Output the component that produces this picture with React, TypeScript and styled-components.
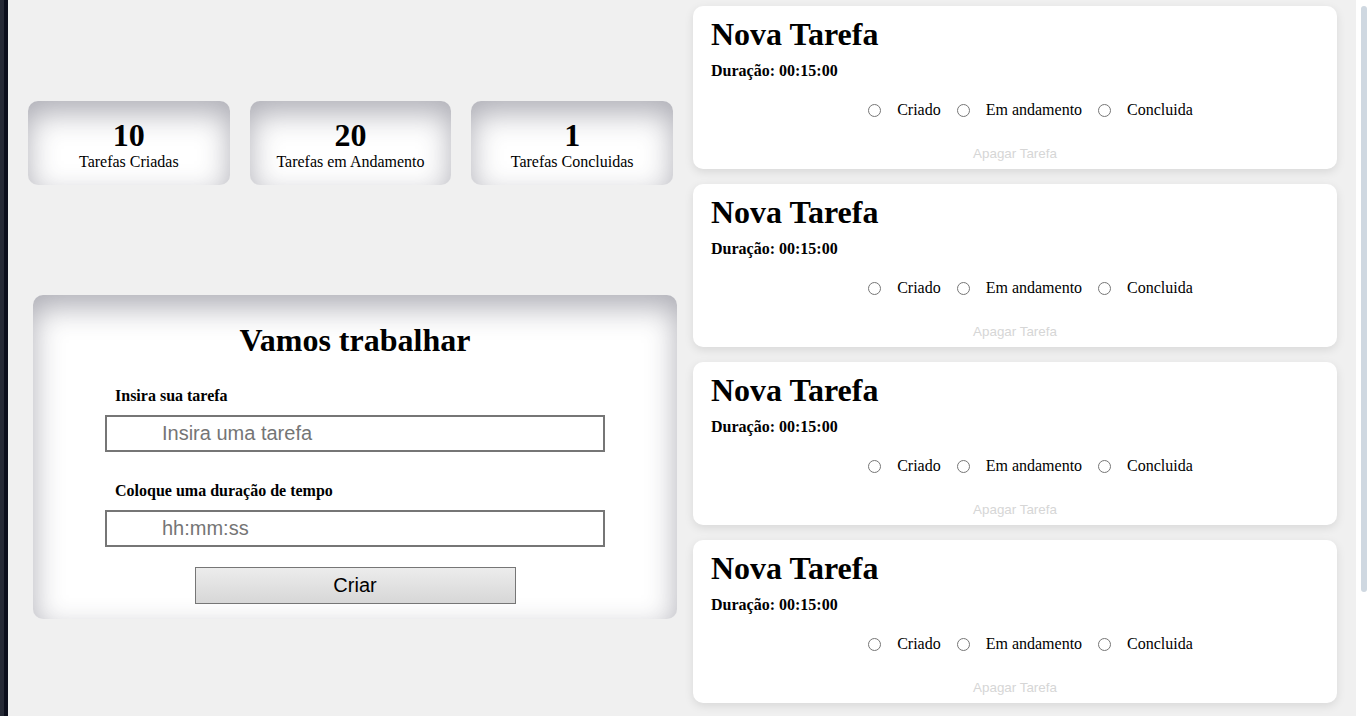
import React from "react";
import styled, { createGlobalStyle } from "styled-components";

const GlobalStyle = createGlobalStyle`
  html, body {
    margin: 0;
    padding: 0;
    height: 100%;
    overflow: hidden;
  }
  body {
    background: #f0f0f0;
    font-family: "Liberation Serif", "Times New Roman", serif;
    color: #000;
  }
`;

const Page = styled.div`
  display: flex;
  align-items: stretch;
  height: 100vh;
  overflow: hidden;
`;

const Strip = styled.div`
  flex: 0 0 8px;
  background: linear-gradient(to right, #262a36 0 4px, #0c0f1c 4px 8px);
`;

const LeftCol = styled.section`
  flex: 0 0 677px;
  box-sizing: border-box;
  padding-top: 101px;
`;

const StatsRow = styled.div`
  display: grid;
  grid-template-columns: repeat(3, 1fr);
  gap: 20px;
  width: 645px;
  margin-left: 20px;
`;

const insetShade = `
  background: #ffffff;
  border-radius: 10px;
  box-shadow: inset 0 12px 30px rgba(50, 50, 70, 0.4);
`;

const StatCard = styled.div`
  ${insetShade}
  height: 84px;
  box-sizing: border-box;
  padding-top: 18px;
  text-align: center;
`;

const StatNumber = styled.div`
  font-weight: bold;
  font-size: 32px;
  line-height: 32px;
`;

const StatLabel = styled.div`
  font-size: 16px;
  line-height: 18px;
  margin-top: 2px;
`;

const FormCard = styled.form`
  ${insetShade}
  width: 644px;
  margin: 110px 0 0 25px;
  box-sizing: border-box;
  padding: 27px 0 15px;
  display: flex;
  flex-direction: column;
  align-items: center;
`;

const FormTitle = styled.h1`
  margin: 0;
  font-size: 32px;
  line-height: 36px;
  font-weight: bold;
`;

const Field = styled.div<{ $top: number }>`
  width: 500px;
  display: flex;
  flex-direction: column;
  margin-top: ${(p) => p.$top}px;
`;

const FieldLabel = styled.label`
  font-weight: bold;
  font-size: 16px;
  line-height: 18px;
  padding-left: 10px;
  margin-bottom: 10px;
`;

const TextInput = styled.input`
  box-sizing: border-box;
  width: 500px;
  height: 37px;
  border: 2px solid #767676;
  background: #ffffff;
  padding: 0 10px 0 55px;
  font-family: "Liberation Sans", Arial, sans-serif;
  font-size: 20px;
  outline: none;
  &::placeholder {
    color: #757575;
  }
`;

const SubmitButton = styled.button`
  box-sizing: border-box;
  width: 321px;
  height: 37px;
  margin-top: 20px;
  border: 1px solid #767676;
  background: linear-gradient(to bottom, #ececec, #d7d7d7);
  font-family: "Liberation Sans", Arial, sans-serif;
  font-size: 20px;
  color: #000;
  padding: 0;
`;

const RightCol = styled.section`
  flex: 0 0 644px;
  margin-left: 8px;
  padding: 6px 0 8px;
  display: flex;
  flex-direction: column;
  gap: 15px;
`;

const TaskCard = styled.article`
  background: #ffffff;
  border-radius: 10px;
  box-shadow: 0 3px 10px rgba(0, 0, 0, 0.1);
  padding: 10px 18px 8px;
  display: flex;
  flex-direction: column;
`;

const TaskTitle = styled.h1`
  margin: 0;
  font-size: 32px;
  line-height: 36px;
  font-weight: bold;
`;

const Duration = styled.h4`
  margin: 10px 0 0;
  font-size: 16px;
  line-height: 18px;
  font-weight: bold;
`;

const StatusRow = styled.div`
  display: flex;
  justify-content: center;
  gap: 16px;
  margin-top: 20px;
  padding-left: 31px;
  font-size: 16px;
  line-height: 20px;
`;

const StatusOption = styled.label`
  display: flex;
  align-items: center;
  gap: 16px;
`;

const Radio = styled.input`
  margin: 0;
  width: 13px;
  height: 13px;
`;

const DeleteButton = styled.button`
  align-self: center;
  margin-top: 26px;
  padding: 0;
  border: none;
  background: none;
  font-family: "Liberation Sans", Arial, sans-serif;
  font-size: 13.4px;
  line-height: 15px;
  color: #d6d6d6;
`;

const Gutter = styled.div`
  flex: 1 1 auto;
`;

const ScrollTrack = styled.div`
  flex: 0 0 13px;
  box-sizing: border-box;
  background: #ffffff;
  padding: 6px 2px 0 5px;
`;

const ScrollThumb = styled.div`
  height: 586px;
  border-radius: 3px;
  background: #cfd8e1;
`;

const stats = [
  { value: 10, label: "Tarefas Criadas" },
  { value: 20, label: "Tarefas em Andamento" },
  { value: 1, label: "Tarefas Concluidas" },
];

const tasks = Array.from({ length: 4 }, (_, i) => ({
  id: i,
  title: "Nova Tarefa",
  duration: "00:15:00",
}));

const statuses = ["Criado", "Em andamento", "Concluida"];

export default function App() {
  return (
    <>
      <GlobalStyle />
      <Page>
        <Strip />
        <LeftCol>
          <StatsRow>
            {stats.map((s) => (
              <StatCard key={s.label}>
                <StatNumber>{s.value}</StatNumber>
                <StatLabel>{s.label}</StatLabel>
              </StatCard>
            ))}
          </StatsRow>
          <FormCard onSubmit={(e) => e.preventDefault()}>
            <FormTitle>Vamos trabalhar</FormTitle>
            <Field $top={29}>
              <FieldLabel htmlFor="tarefa">Insira sua tarefa</FieldLabel>
              <TextInput id="tarefa" type="text" placeholder="Insira uma tarefa" />
            </Field>
            <Field $top={30}>
              <FieldLabel htmlFor="duracao">Coloque uma duração de tempo</FieldLabel>
              <TextInput id="duracao" type="text" placeholder="hh:mm:ss" />
            </Field>
            <SubmitButton type="submit">Criar</SubmitButton>
          </FormCard>
        </LeftCol>
        <RightCol>
          {tasks.map((t) => (
            <TaskCard key={t.id}>
              <TaskTitle>{t.title}</TaskTitle>
              <Duration>Duração: {t.duration}</Duration>
              <StatusRow>
                {statuses.map((s) => (
                  <StatusOption key={s}>
                    <Radio type="radio" name={`status-${t.id}`} />
                    {s}
                  </StatusOption>
                ))}
              </StatusRow>
              <DeleteButton type="button">Apagar Tarefa</DeleteButton>
            </TaskCard>
          ))}
        </RightCol>
        <Gutter />
        <ScrollTrack aria-hidden="true">
          <ScrollThumb />
        </ScrollTrack>
      </Page>
    </>
  );
}
